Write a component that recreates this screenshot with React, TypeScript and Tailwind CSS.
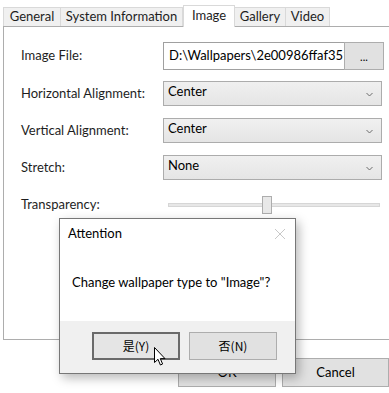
import React from "react";

const font = { fontFamily: 'Lato, "Noto Sans", "Noto Sans CJK SC", sans-serif' };

function Combo({ value }: { value: string }) {
  return (
    <div className="flex h-[25px] w-[219px] items-center justify-between border border-[#acacac] bg-gradient-to-b from-[#f0f0f0] to-[#e5e5e5] pl-[4px] pr-[8px]">
      <span className="-mt-[3px] text-black">{value}</span>
      <svg width="7" height="5" viewBox="0 0 7 5" className="mt-[1px]">
        <path d="M0.5 1 L3.5 4 L6.5 1" fill="none" stroke="#6d6d6d" strokeWidth="1" />
      </svg>
    </div>
  );
}

export default function App() {
  return (
    <div className="relative h-[393px] w-[389px] overflow-hidden whitespace-nowrap bg-white text-[13px] text-[#1e1e1e]" style={font}>
      {/* tabs */}
      <div className="flex items-end pl-[3px] pt-[5px]">
        <div className="flex h-[19px] w-[58px] items-center justify-center border border-b-0 border-[#d9d9d9] bg-[#f0f0f0]">General</div>
        <div className="flex h-[19px] w-[122px] items-center justify-center border border-b-0 border-l-0 border-[#d9d9d9] bg-[#f0f0f0]">System Information</div>
        <div className="relative z-10 -mb-px flex h-[22px] w-[52px] items-center justify-center border border-b-0 border-[#d9d9d9] bg-white pb-[1px]">Image</div>
        <div className="flex h-[19px] w-[51px] items-center justify-center border border-b-0 border-l-0 border-[#d9d9d9] bg-[#f0f0f0]">Gallery</div>
        <div className="flex h-[19px] w-[44px] items-center justify-center border border-b-0 border-l-0 border-[#d9d9d9] bg-[#f0f0f0]">Video</div>
      </div>
      {/* panel */}
      <div className="ml-[3px] flex h-[314px] w-[392px] flex-col border border-[#adadad] pl-[17px] pt-[15px]">
        <div className="flex h-[28px] items-center">
          <div className="w-[142px]">Image File:</div>
          <div className="flex h-[28px] w-[181px] items-center overflow-hidden border border-r-0 border-[#a0a0a0] pl-[5px] text-black">D:\Wallpapers\2e00986ffaf351</div>
          <div className="flex h-[28px] w-[40px] items-center justify-center border border-[#adadad] bg-[#e1e1e1] pt-[2px] text-[11px] text-black">...</div>
        </div>
        <div className="mt-[11px] flex h-[25px] items-center">
          <div className="w-[142px]">Horizontal Alignment:</div>
          <Combo value="Center" />
        </div>
        <div className="mt-[12px] flex h-[25px] items-center">
          <div className="w-[142px]">Vertical Alignment:</div>
          <Combo value="Center" />
        </div>
        <div className="mt-[12px] flex h-[25px] items-center">
          <div className="w-[142px]">Stretch:</div>
          <Combo value="None" />
        </div>
        <div className="mt-[16px] flex h-[18px] items-center">
          <div className="w-[147px]">Transparency:</div>
          <div className="relative h-[4px] w-[212px] border border-[#d6d6d6] bg-[#e7e7e7]">
            <div className="absolute left-[93px] top-[-8px] h-[18px] w-[10px] border border-[#adadad] bg-[#e8e8e8]" />
          </div>
        </div>
      </div>
      {/* bottom buttons */}
      <div className="mt-[18px] flex gap-[6px] pl-[178px]">
        <div className="flex h-[29px] w-[99px] items-center justify-center border border-[#adadad] bg-[#e1e1e1] text-black">OK</div>
        <div className="flex h-[29px] w-[108px] items-center justify-center border border-[#adadad] bg-[#e1e1e1] text-black">Cancel</div>
      </div>

      {/* dialog */}
      <div className="absolute left-[59px] top-[218px] flex h-[156px] w-[237px] flex-col border border-[#777777] bg-white shadow-[3px_4px_10px_rgba(0,0,0,0.28)]">
        <div className="flex h-[30px] items-center justify-between pl-[8px] pr-[9px]">
          <span className="text-black">Attention</span>
          <svg width="12" height="12" viewBox="0 0 12 12">
            <path d="M1 1 L11 11 M11 1 L1 11" stroke="#c8c8c8" strokeWidth="1" />
          </svg>
        </div>
        <div className="flex flex-1 items-center pb-[4px] pl-[12px] text-black">Change wallpaper type to "Image"?</div>
        <div className="flex h-[52px] items-start justify-end gap-[9px] bg-[#f0f0f0] pr-[18px] pt-[11px]">
          <div className="flex h-[28px] w-[88px] items-center justify-center border-2 border-[#6a6a6a] bg-[#e5e5e5] text-black" style={{ fontFamily: '"Noto Sans CJK SC", sans-serif', fontSize: 12 }}>是(Y)</div>
          <div className="flex h-[28px] w-[88px] items-center justify-center border border-[#adadad] bg-[#e1e1e1] text-black" style={{ fontFamily: '"Noto Sans CJK SC", sans-serif', fontSize: 12 }}>否(N)</div>
        </div>
      </div>

      {/* cursor */}
      <svg className="absolute left-[154px] top-[347px]" width="13" height="20" viewBox="0 0 13 20">
        <path d="M0.5 0.5 L0.5 15.5 L4 12.3 L6.4 18 L8.6 17 L6.3 11.6 L11 11.6 Z" fill="white" stroke="black" strokeWidth="1" strokeLinejoin="round" />
      </svg>
    </div>
  );
}
